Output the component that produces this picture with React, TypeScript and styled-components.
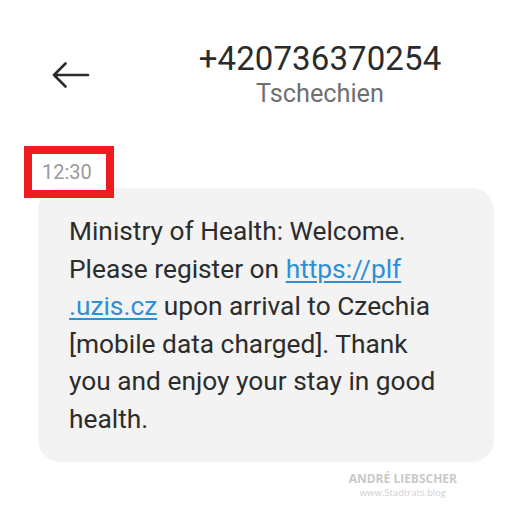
import React from "react";
import styled, { createGlobalStyle } from "styled-components";

const Global = createGlobalStyle`
  html, body { margin: 0; padding: 0; background: #ffffff; }
  body { font-family: Roboto, "Noto Sans", sans-serif; }
`;

const Page = styled.div`
  width: 525px;
  height: 525px;
  background: #ffffff;
  display: flex;
  flex-direction: column;
  overflow: hidden;
`;

const Header = styled.header`
  display: flex;
  flex-direction: row;
  padding-top: 39px;
`;

const BackSlot = styled.div`
  width: 115px;
  box-sizing: border-box;
  padding: 23px 0 0 52px;
`;

const TitleBlock = styled.div`
  flex: 1;
  display: flex;
  flex-direction: column;
  align-items: center;
`;

const Phone = styled.div`
  font-size: 33px;
  line-height: 40px;
  color: #2b2b2b;
  letter-spacing: 0.1px;
`;

const Country = styled.div`
  font-size: 25.3px;
  line-height: 30px;
  color: #707070;
`;

const Thread = styled.section`
  display: flex;
  flex-direction: column;
  padding-top: 37px;
`;

const Timestamp = styled.div`
  position: relative;
  z-index: 1;
  box-sizing: border-box;
  width: 90px;
  height: 52px;
  margin-left: 24px;
  margin-bottom: -10px;
  border: 8px solid #ee1c1f;
  padding-left: 10px;
  font-size: 20px;
  line-height: 36px;
  color: #9a9a9a;
`;

const Bubble = styled.div`
  margin: 0 31px 0 38px;
  background: #f3f3f3;
  border-radius: 22px;
  padding: 25px 20px 24px 31px;
  font-size: 26.3px;
  line-height: 37.5px;
  color: #2c2c2c;
  white-space: nowrap;
`;

const Link = styled.a`
  color: #2d8fd9;
  text-decoration: underline;
  text-underline-offset: 3px;
  text-decoration-thickness: 1.5px;
`;

const Watermark = styled.div`
  display: flex;
  flex-direction: column;
  align-items: center;
  align-self: flex-end;
  margin-right: 68px;
  margin-top: 9px;
`;

const WatermarkName = styled.div`
  font-family: "Open Sans", "Liberation Sans", sans-serif;
  font-weight: 700;
  font-size: 12px;
  line-height: 15px;
  color: #c9c9c9;
`;

const WatermarkSite = styled.div`
  font-family: "Open Sans", "Liberation Sans", sans-serif;
  font-size: 9.5px;
  line-height: 13px;
  color: #d0d0d0;
`;

const BackArrow = () => (
  <svg width="38" height="28" viewBox="0 0 38 28" fill="none">
    <path
      d="M2 13 H36 M13.5 1.5 L2 13 L13.5 24.5"
      stroke="#2b2b2b"
      strokeWidth="2.6"
      strokeLinecap="round"
      strokeLinejoin="round"
    />
  </svg>
);

export default function App() {
  return (
    <Page>
      <Global />
      <Header>
        <BackSlot>
          <BackArrow />
        </BackSlot>
        <TitleBlock>
          <Phone>+420736370254</Phone>
          <Country>Tschechien</Country>
        </TitleBlock>
      </Header>
      <Thread>
        <Timestamp>12:30</Timestamp>
        <Bubble>
          Ministry of Health: Welcome.
          <br />
          Please register on <Link href="#">https://plf</Link>
          <br />
          <Link href="#">.uzis.cz</Link> upon arrival to Czechia
          <br />
          [mobile data charged]. Thank
          <br />
          you and enjoy your stay in good
          <br />
          health.
        </Bubble>
        <Watermark>
          <WatermarkName>ANDRÉ LIEBSCHER</WatermarkName>
          <WatermarkSite>www.Stadtrats.blog</WatermarkSite>
        </Watermark>
      </Thread>
    </Page>
  );
}
